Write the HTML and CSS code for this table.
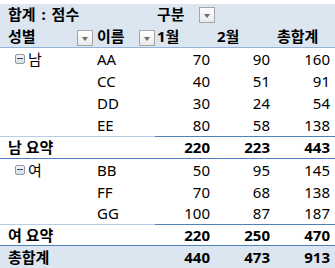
FILE: index.html
```html
<!DOCTYPE html>
<html lang="ko">
<head>
<meta charset="utf-8">
<link rel="stylesheet" href="styles.css">
</head>
<body>
<div class="pivot">
  <div class="head">
    <div class="row h1">
      <div class="cell c-a span2 bold title">합계 : 점수</div>
      <div class="cell c-c span3 bold">구분<span class="dd dd-c"></span></div>
    </div>
    <div class="row h2">
      <div class="cell c-a bold between">성별<span class="dd"></span></div>
      <div class="cell c-b bold between">이름<span class="dd"></span></div>
      <div class="cell c-c bold">1월</div>
      <div class="cell c-d bold">2월</div>
      <div class="cell c-e bold">총합계</div>
    </div>
  </div>

  <div class="row d22">
    <div class="cell c-a grp"><span class="minus"></span>남</div>
    <div class="cell c-b">AA</div>
    <div class="cell c-c num">70</div>
    <div class="cell c-d num">90</div>
    <div class="cell c-e num">160</div>
  </div>
  <div class="row d22">
    <div class="cell c-a"></div>
    <div class="cell c-b">CC</div>
    <div class="cell c-c num">40</div>
    <div class="cell c-d num">51</div>
    <div class="cell c-e num">91</div>
  </div>
  <div class="row d22">
    <div class="cell c-a"></div>
    <div class="cell c-b">DD</div>
    <div class="cell c-c num">30</div>
    <div class="cell c-d num">24</div>
    <div class="cell c-e num">54</div>
  </div>
  <div class="row d22">
    <div class="cell c-a"></div>
    <div class="cell c-b">EE</div>
    <div class="cell c-c num">80</div>
    <div class="cell c-d num">58</div>
    <div class="cell c-e num">138</div>
  </div>
  <div class="row sub s1">
    <div class="cell c-a span2 bold">남 요약</div>
    <div class="cell c-c num bold">220</div>
    <div class="cell c-d num bold">223</div>
    <div class="cell c-e num bold">443</div>
  </div>

  <div class="row d22">
    <div class="cell c-a grp"><span class="minus"></span>여</div>
    <div class="cell c-b">BB</div>
    <div class="cell c-c num">50</div>
    <div class="cell c-d num">95</div>
    <div class="cell c-e num">145</div>
  </div>
  <div class="row d22">
    <div class="cell c-a"></div>
    <div class="cell c-b">FF</div>
    <div class="cell c-c num">70</div>
    <div class="cell c-d num">68</div>
    <div class="cell c-e num">138</div>
  </div>
  <div class="row d21">
    <div class="cell c-a"></div>
    <div class="cell c-b">GG</div>
    <div class="cell c-c num">100</div>
    <div class="cell c-d num">87</div>
    <div class="cell c-e num">187</div>
  </div>
  <div class="row sub s2">
    <div class="cell c-a span2 bold">여 요약</div>
    <div class="cell c-c num bold">220</div>
    <div class="cell c-d num bold">250</div>
    <div class="cell c-e num bold">470</div>
  </div>
  <div class="row total">
    <div class="cell c-a span2 bold">총합계</div>
    <div class="cell c-c num bold">440</div>
    <div class="cell c-d num bold">473</div>
    <div class="cell c-e num bold">913</div>
  </div>
</div>
</body>
</html>
```

FILE: styles.css
```css
html, body {
  margin: 0;
  padding: 0;
  background: #ffffff;
}

body {
  font-family: "Noto Sans", "Noto Sans CJK KR", sans-serif;
  font-size: 15px;
  color: #000000;
  line-height: 1;
}

.pivot {
  width: 335px;
  padding-top: 4px;
}

.head {
  background: #dce6f1;
  border-bottom: 1px solid #95b3d7;
}

.row {
  display: grid;
  grid-template-columns: 93px 62px 59px 59px 62px;
}

.h1 { height: 21px; }
.h2 { height: 22px; }
.d22 { height: 22px; }
.d21 { height: 21px; }

.cell {
  display: flex;
  align-items: center;
  white-space: nowrap;
  min-width: 0;
}

.title { word-spacing: 2px; }

.span2 { grid-column: span 2; }
.span3 { grid-column: span 3; }

.c-a { padding-left: 8px; }
.c-b { padding-left: 4px; }
.c-c { padding-left: 2px; }
.c-d { padding-left: 3px; }
.c-e { padding-left: 4px; }

.c-c.num { padding-right: 4px; }
.c-d.num { padding-right: 3px; }
.c-e.num { padding-right: 5px; }

.num { justify-content: flex-end; padding-left: 0; }

.bold { font-weight: 700; }

.between { justify-content: space-between; }

.dd {
  box-sizing: border-box;
  width: 16px;
  height: 16px;
  border: 1px solid #a5a5a5;
  background: linear-gradient(#ffffff, #e9e9e9);
  position: relative;
  flex: none;
  margin-top: 4px;
}

.dd::after {
  content: "";
  position: absolute;
  left: 4px;
  top: 6px;
  border-left: 3px solid transparent;
  border-right: 3px solid transparent;
  border-top: 4px solid #6d6d6d;
}

.dd-c { margin-left: 14px; margin-top: 0; }

.grp { padding-left: 15px; }

.minus {
  box-sizing: border-box;
  width: 10px;
  height: 10px;
  border: 1px solid #8e9aa8;
  border-radius: 2px;
  background: linear-gradient(#f4f6f8, #d8dde3);
  position: relative;
  margin-right: 3px;
  flex: none;
}

.minus::after {
  content: "";
  position: absolute;
  left: 1px;
  top: 3px;
  width: 6px;
  height: 1px;
  background: #3c4654;
}

.sub {
  border-top: 1px solid #4f81bd;
}

.sub > .c-a {
  box-shadow: 0 -1px 0 #b8cce4;
}

.s1 {
  height: 21px;
  border-bottom: 1px solid #4f81bd;
}

.s2 { height: 20px; }

.total {
  height: 22px;
  background: #dce6f1;
  border-top: 1px solid #4f81bd;
}
```
